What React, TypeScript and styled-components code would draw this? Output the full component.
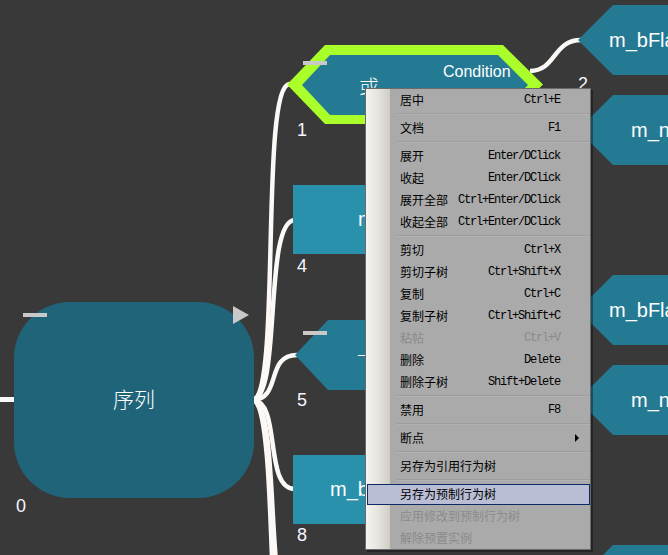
import React from "react";
import styled, { createGlobalStyle } from "styled-components";

const GlobalStyle = createGlobalStyle`
  html, body { margin: 0; padding: 0; background: #393939; overflow: hidden; }
`;

const Canvas = styled.div`
  position: relative;
  width: 668px;
  height: 555px;
  overflow: hidden;
  background: #393939;
  font-family: "Liberation Sans", Arial, sans-serif;
`;

const EdgeLayer = styled.svg`
  position: absolute;
  left: 0;
  top: 0;
  width: 668px;
  height: 555px;
`;

/* ---------- diagram nodes ---------- */

const NodeGroup = styled.div<{ $x: number; $y: number }>`
  position: absolute;
  left: ${(p) => p.$x}px;
  top: ${(p) => p.$y}px;
  display: flex;
  flex-direction: column;
  align-items: flex-start;
`;

const Shape = styled.div<{ $w: number; $h: number }>`
  position: relative;
  width: ${(p) => p.$w}px;
  height: ${(p) => p.$h}px;
  box-sizing: border-box;
  display: flex;
  align-items: center;
  color: #ffffff;
  font-size: 20px;
  white-space: nowrap;
`;

const RootShape = styled(Shape)`
  background: #20647a;
  border-radius: 56px;
  justify-content: center;
  padding-bottom: 5px;
  font-family: "Noto Sans CJK SC", sans-serif;
  font-size: 21px;
  font-weight: 300;
`;

const RectShape = styled(Shape)<{ $pad: number }>`
  background: #2a91ad;
  padding-left: ${(p) => p.$pad}px;
  overflow: hidden;
`;

const HexShape = styled(Shape)<{ $pad: number; $bevel: number }>`
  background: #247a93;
  padding-left: ${(p) => p.$pad}px;
  overflow: hidden;
  clip-path: polygon(
    ${(p) => p.$bevel}px 0,
    100% 0,
    100% 100%,
    ${(p) => p.$bevel}px 100%,
    0 50%
  );
`;

const CjkText = styled.span`
  font-family: "Noto Sans CJK SC", sans-serif;
  font-weight: 300;
`;

const SelectedShape = styled(Shape)`
  background: #aaff2a;
  padding: 10px 15px 9px;
  clip-path: polygon(
    38px 0,
    calc(100% - 40px) 0,
    100% 50%,
    calc(100% - 40px) 100%,
    38px 100%,
    0 50%
  );
`;

const SelectedFill = styled.div`
  flex: 1;
  align-self: stretch;
  background: #247a93;
  clip-path: polygon(
    28px 0,
    calc(100% - 30px) 0,
    100% 50%,
    calc(100% - 30px) 100%,
    28px 100%,
    0 50%
  );
  display: flex;
  align-items: center;
  gap: 64px;
  padding-left: 57px;
`;

const OrLabel = styled.span`
  font-family: "Noto Sans CJK SC", sans-serif;
  font-weight: 300;
  font-size: 20px;
  margin-top: 2px;
`;

const ConditionLabel = styled.span`
  align-self: flex-start;
  margin-top: 8px;
  font-size: 16px;
  line-height: 18px;
`;

const IndexLabel = styled.div<{ $indent: number; $lift?: number }>`
  margin-left: ${(p) => p.$indent}px;
  margin-top: ${(p) => p.$lift ?? 0}px;
  font-size: 18px;
  line-height: 18px;
  color: #f6f6ff;
`;

const CollapseBar = styled.div<{ $left: number; $top: number }>`
  position: absolute;
  left: ${(p) => p.$left}px;
  top: ${(p) => p.$top}px;
  width: 24px;
  height: 4px;
  background: #c9c9c9;
`;

const ExpandArrow = styled.div`
  position: absolute;
  right: 5px;
  top: 4px;
  width: 0;
  height: 0;
  border-left: 16px solid #c9c9c9;
  border-top: 9px solid transparent;
  border-bottom: 9px solid transparent;
`;

/* ---------- context menu ---------- */

const Menu = styled.div`
  position: absolute;
  left: 365px;
  top: 88px;
  width: 226px;
  box-sizing: border-box;
  border: 1px solid #6a6a6a;
  background: #aaaaaa;
  box-shadow: 2px 2px 0 rgba(0, 0, 0, 0.35);
  display: flex;
  flex-direction: column;
  z-index: 5;

  &::before {
    content: "";
    position: absolute;
    left: 0;
    top: 0;
    bottom: 0;
    width: 24px;
    background: linear-gradient(to right, #f5f4f0, #e6e4de 50%, #cfccc3);
  }
`;

const Item = styled.div<{ $disabled?: boolean; $active?: boolean }>`
  position: relative;
  z-index: 1;
  height: 22px;
  box-sizing: border-box;
  padding: 0 30px 0 34px;
  display: flex;
  align-items: center;
  justify-content: space-between;
  color: ${(p) => (p.$disabled ? "#8b8b8b" : "#000000")};

  &::before {
    content: "";
    display: ${(p) => (p.$active ? "block" : "none")};
    position: absolute;
    left: 1px;
    right: 0;
    top: 1px;
    bottom: 0;
    background: #b9bed4;
    border: 1px solid #0c2a6a;
  }
`;

const ItemLabel = styled.span`
  position: relative;
  font-family: "Noto Sans CJK SC", sans-serif;
  font-size: 12px;
  line-height: 14px;
`;

const Shortcut = styled.span`
  position: relative;
  font-family: "Liberation Mono", "Courier New", monospace;
  font-size: 12px;
  letter-spacing: -1.2px;
  line-height: 14px;
`;

const SubArrow = styled.span`
  position: absolute;
  right: 11px;
  top: 7px;
  width: 0;
  height: 0;
  border-left: 4px solid #000000;
  border-top: 4px solid transparent;
  border-bottom: 4px solid transparent;
`;

const Separator = styled.div`
  height: 6px;
  box-sizing: border-box;
  padding-top: 2px;
  margin-left: 31px;

  &::after {
    content: "";
    display: block;
    border-top: 1px solid #9d9d9d;
    border-bottom: 1px solid #b2b2b2;
  }
`;

type MenuEntry =
  | { sep: true }
  | {
      label: string;
      key?: string;
      disabled?: boolean;
      active?: boolean;
      sub?: boolean;
    };

const menu: MenuEntry[] = [
  { label: "居中", key: "Ctrl+E" },
  { sep: true },
  { label: "文档", key: "F1" },
  { sep: true },
  { label: "展开", key: "Enter/DClick" },
  { label: "收起", key: "Enter/DClick" },
  { label: "展开全部", key: "Ctrl+Enter/DClick" },
  { label: "收起全部", key: "Ctrl+Enter/DClick" },
  { sep: true },
  { label: "剪切", key: "Ctrl+X" },
  { label: "剪切子树", key: "Ctrl+Shift+X" },
  { label: "复制", key: "Ctrl+C" },
  { label: "复制子树", key: "Ctrl+Shift+C" },
  { label: "粘帖", key: "Ctrl+V", disabled: true },
  { label: "删除", key: "Delete" },
  { label: "删除子树", key: "Shift+Delete" },
  { sep: true },
  { label: "禁用", key: "F8" },
  { sep: true },
  { label: "断点", sub: true },
  { sep: true },
  { label: "另存为引用行为树" },
  { sep: true },
  { label: "另存为预制行为树", active: true },
  { label: "应用修改到预制行为树", disabled: true },
  { label: "解除预置实例", disabled: true },
];

const edges = [
  "M252 400 C282 400 259 84 290 84",
  "M252 400 C282 400 263 220 295 220",
  "M252 400 C282 400 265 355 297 355",
  "M252 400 C282 400 263 489 295 489",
  "M252 400 C282 400 263 625 295 625",
  "M252 400 C282 400 263 760 295 760",
  "M530 71 C556 71 553 40 581 40",
];

const rightNodes = [
  { y: 5, text: "m_bFlag", pad: 31, index: 2 },
  { y: 95, text: "m_nValue", pad: 53, index: 3 },
  { y: 275, text: "m_bFlag", pad: 31, index: 6 },
  { y: 365, text: "m_nValue", pad: 53, index: 7 },
  { y: 545, text: "m_bFlag", pad: 31, index: 9 },
];

export default function App() {
  return (
    <>
      <GlobalStyle />
      <Canvas>
        <EdgeLayer viewBox="0 0 668 555">
          <line x1="0" y1="399.5" x2="16" y2="399.5" stroke="#fcf8f6" strokeWidth="5" />
          {edges.map((d, i) => (
            <path key={i} d={d} fill="none" stroke="#fcf8f6" strokeWidth="4.5" />
          ))}
        </EdgeLayer>

        <NodeGroup $x={14} $y={302}>
          <RootShape $w={240} $h={196}>
            序列
            <ExpandArrow />
          </RootShape>
          <CollapseBar $left={9} $top={11} />
          <IndexLabel $indent={2} $lift={-1}>0</IndexLabel>
        </NodeGroup>

        <NodeGroup $x={287} $y={45}>
          <SelectedShape $w={256} $h={79}>
            <SelectedFill>
              <OrLabel>或</OrLabel>
              <ConditionLabel>Condition</ConditionLabel>
            </SelectedFill>
          </SelectedShape>
          <CollapseBar $left={16} $top={16} />
          <IndexLabel $indent={10} $lift={-3}>1</IndexLabel>
        </NodeGroup>

        <NodeGroup $x={293} $y={185}>
          <RectShape $w={240} $h={69} $pad={65}>
            m_nIndex
          </RectShape>
          <IndexLabel $indent={4} $lift={3}>4</IndexLabel>
        </NodeGroup>

        <NodeGroup $x={295} $y={320}>
          <HexShape $w={240} $h={70} $pad={62} $bevel={33}>
            <CjkText>一个</CjkText>
          </HexShape>
          <CollapseBar $left={8} $top={11} />
          <IndexLabel $indent={2} $lift={1}>5</IndexLabel>
        </NodeGroup>

        <NodeGroup $x={293} $y={455}>
          <RectShape $w={240} $h={69} $pad={37}>
            m_bFlag
          </RectShape>
          <IndexLabel $indent={4} $lift={2}>8</IndexLabel>
        </NodeGroup>

        {rightNodes.map((n) => (
          <NodeGroup key={n.index} $x={578} $y={n.y}>
            <HexShape $w={220} $h={70} $pad={n.pad} $bevel={35}>
              {n.text}
            </HexShape>
            <IndexLabel $indent={0}>{n.index}</IndexLabel>
          </NodeGroup>
        ))}

        <Menu>
          {menu.map((m, i) =>
            "sep" in m ? (
              <Separator key={i} />
            ) : (
              <Item key={i} $disabled={m.disabled} $active={m.active}>
                <ItemLabel>{m.label}</ItemLabel>
                {m.key && <Shortcut>{m.key}</Shortcut>}
                {m.sub && <SubArrow />}
              </Item>
            )
          )}
        </Menu>
      </Canvas>
    </>
  );
}
